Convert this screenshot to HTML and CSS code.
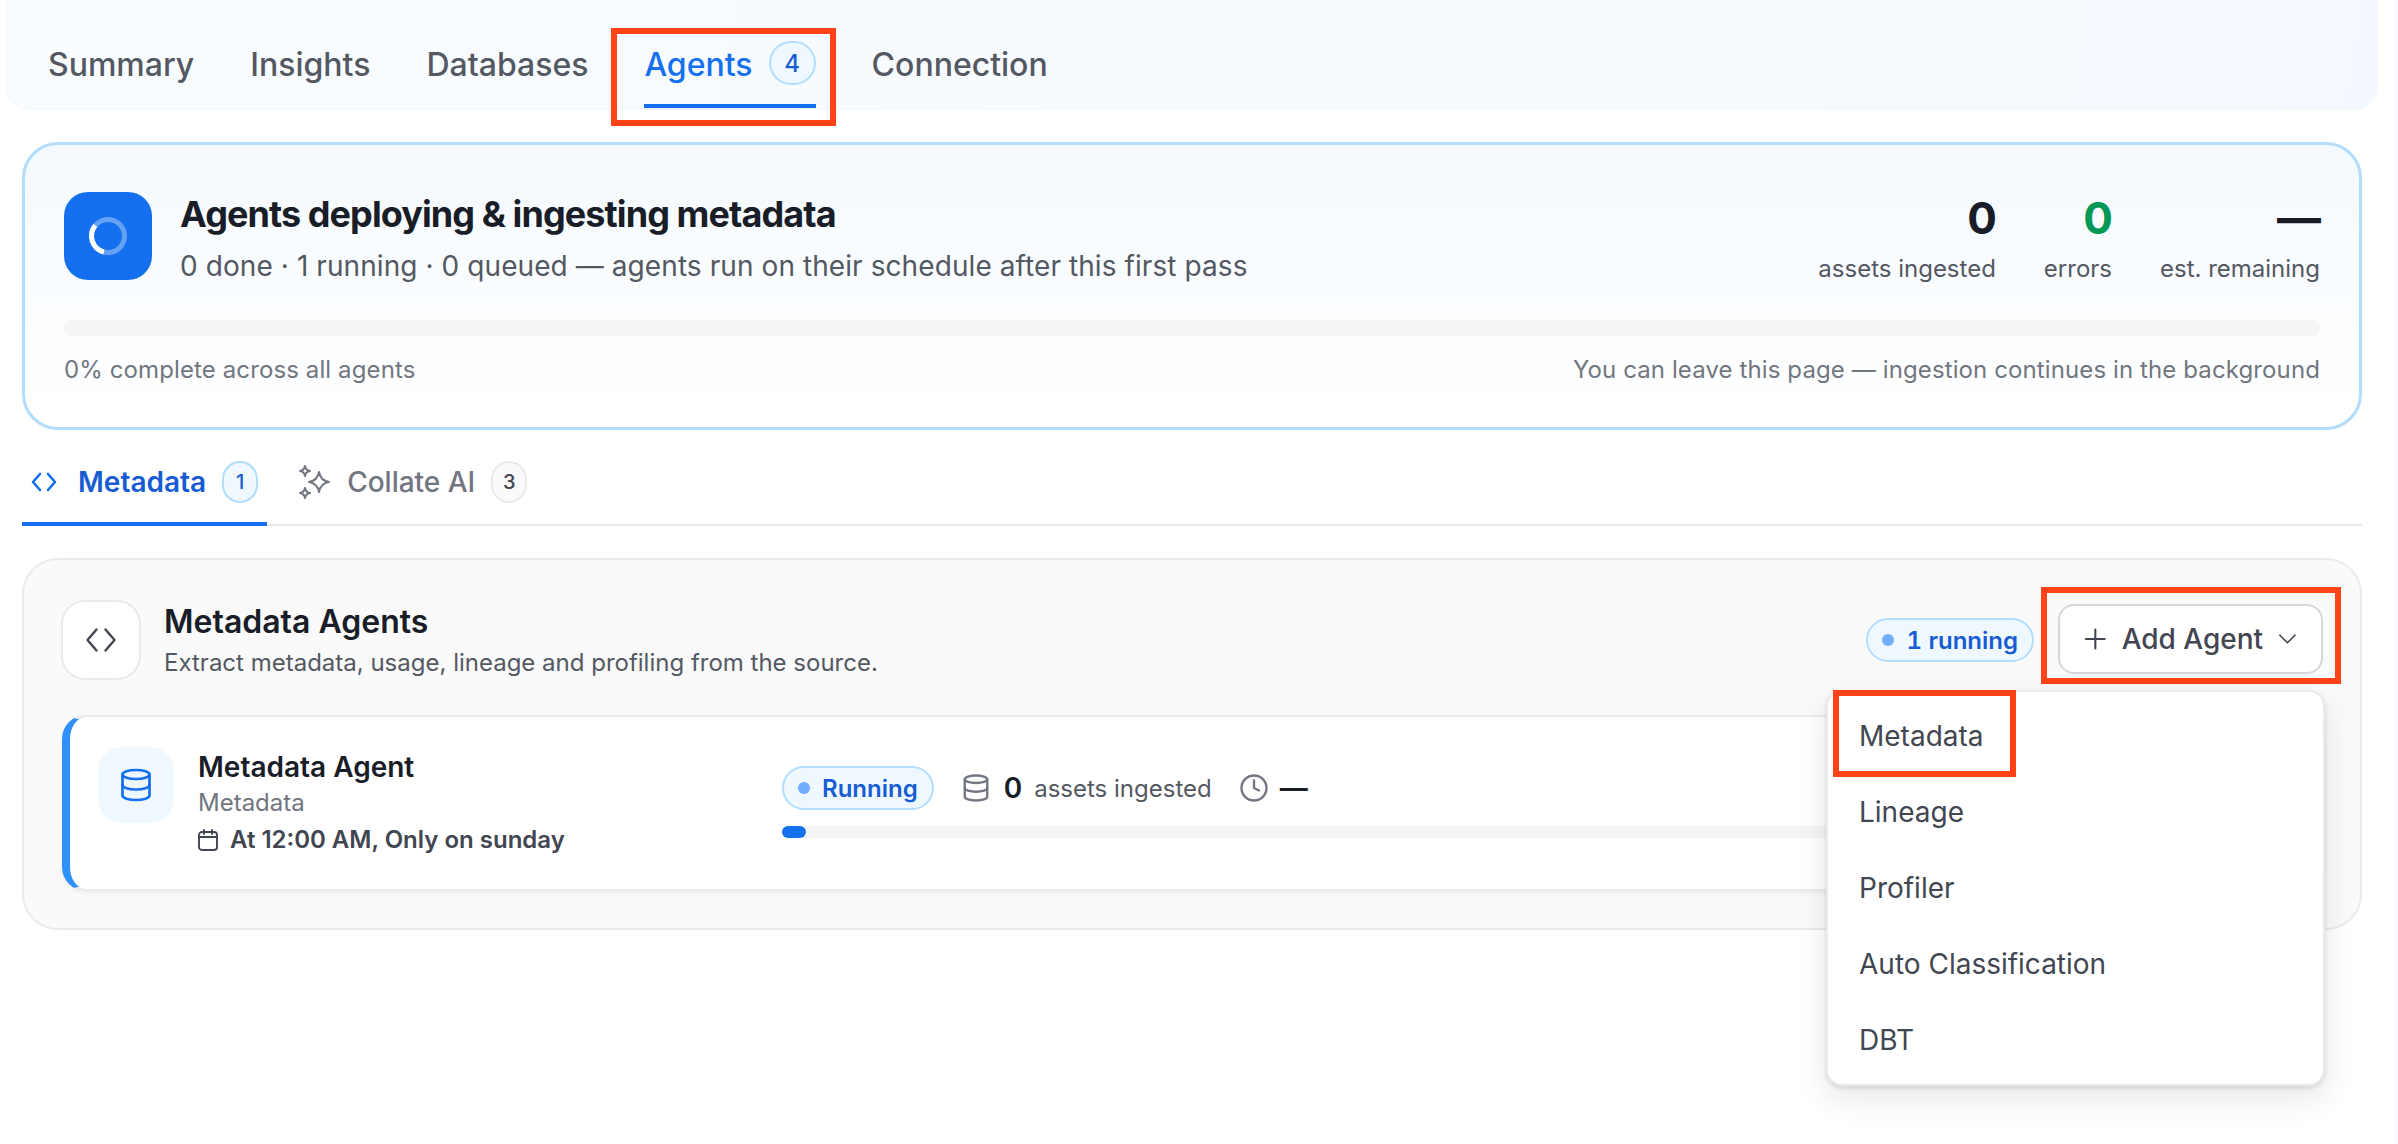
FILE: index.html
```html
<!DOCTYPE html>
<html>
    <head>
        <title>Agents</title>
        <meta charset="UTF-8">
        <link rel="stylesheet" href="styles.css">
    </head>
    <body>
        <nav class="top_tabs">
            <div class="top_tab">Summary</div>
            <div class="top_tab">Insights</div>
            <div class="top_tab">Databases</div>
            <div class="top_tab active">
                Agents <span class="tab_count">4</span>
                <div class="red_box agents_box"></div>
            </div>
            <div class="top_tab">Connection</div>
        </nav>

        <main class="content">
            <section class="hero">
                <div class="hero_head">
                    <div class="hero_icon">
                        <svg width="44" height="44" viewBox="0 0 44 44" fill="none">
                            <circle cx="22" cy="22" r="16.5" stroke="#fff" stroke-opacity="0.35" stroke-width="5"/>
                            <path d="M9.400 11.400A16.500 16.500 0 0 0 17.900 38" stroke="#fff" stroke-width="5"/>
                        </svg>
                    </div>
                    <div class="hero_text">
                        <h1>Agents deploying &amp; ingesting metadata</h1>
                        <p>0 done · 1 running · 0 queued — agents run on their schedule after this first pass</p>
                    </div>
                    <div class="stats">
                        <div class="stat"><b>0</b><span>assets ingested</span></div>
                        <div class="stat"><b class="green">0</b><span>errors</span></div>
                        <div class="stat"><b>—</b><span>est. remaining</span></div>
                    </div>
                </div>
                <div class="hero_bar"></div>
                <div class="hero_foot">
                    <span>0% complete across all agents</span>
                    <span>You can leave this page — ingestion continues in the background</span>
                </div>
            </section>

            <div class="sub_tabs">
                <div class="sub_tab active">
                    <svg class="code_icon" width="26" height="20" viewBox="0 0 26 20" fill="none" stroke="#1570ef" stroke-width="2.6" stroke-linecap="round" stroke-linejoin="round">
                        <path d="M9 2 2 10l7 8"/>
                        <path d="M17 2l7 8-7 8"/>
                    </svg>
                    Metadata <span class="sub_count">1</span>
                </div>
                <div class="sub_tab">
                    <svg width="33" height="34" viewBox="0 0 33 34" fill="none" stroke="#717680" stroke-width="2" stroke-linejoin="round">
                        <path d="M7 1C7.500 4 9 5.500 12 6 9 6.500 7.500 8 7 11 6.500 8 5 6.500 2 6 5 5.500 6.500 4 7 1Z"/>
                        <path d="M21 7C22 13 25 16 31 17 25 18 22 21 21 27 20 21 17 18 11 17 17 16 20 13 21 7Z"/>
                        <path d="M7 23C7.500 26 9 27.500 12 28 9 28.500 7.500 30 7 33 6.500 30 5 28.500 2 28 5 27.500 6.500 26 7 23Z"/>
                    </svg>
                    Collate AI <span class="sub_count grey">3</span>
                </div>
            </div>

            <section class="panel">
                <div class="panel_head">
                    <div class="panel_icon">
                        <svg width="36" height="36" viewBox="0 0 24 24" fill="none" stroke="#414651" stroke-width="1.6" stroke-linecap="round" stroke-linejoin="round">
                            <path d="M9 5 3 12l6 7"/>
                            <path d="M15 5l6 7-6 7"/>
                        </svg>
                    </div>
                    <div class="panel_text">
                        <h2>Metadata Agents</h2>
                        <p>Extract metadata, usage, lineage and profiling from the source.</p>
                    </div>
                    <div class="pill running_pill"><i class="dot"></i>1 running</div>
                    <div class="add_wrap">
                        <button class="add_btn" type="button">
                            <svg width="24" height="24" viewBox="0 0 24 24" fill="none" stroke="#414651" stroke-width="2.2" stroke-linecap="round">
                                <path d="M12 2v20M2 12h20"/>
                            </svg>
                            Add Agent
                            <svg class="caret" width="20" height="20" viewBox="0 0 20 20" fill="none" stroke="#414651" stroke-width="1.8" stroke-linecap="round" stroke-linejoin="round">
                                <path d="M2 6l8 8 8-8"/>
                            </svg>
                        </button>
                        <div class="red_box add_box"></div>
                        <div class="menu">
                            <div class="menu_item">Metadata</div>
                            <div class="menu_item">Lineage</div>
                            <div class="menu_item">Profiler</div>
                            <div class="menu_item">Auto Classification</div>
                            <div class="menu_item">DBT</div>
                            <div class="red_box menu_box"></div>
                        </div>
                    </div>
                </div>

                <div class="agent_card">
                    <div class="agent_icon">
                        <svg width="36" height="36" viewBox="0 0 24 24" fill="none" stroke="#1570ef" stroke-width="1.8" stroke-linecap="round" stroke-linejoin="round">
                            <ellipse cx="12" cy="5" rx="9" ry="3"/>
                            <path d="M21 5v14c0 1.660-4 3-9 3s-9-1.340-9-3V5"/>
                            <path d="M21 12c0 1.660-4 3-9 3s-9-1.340-9-3"/>
                        </svg>
                    </div>
                    <div class="agent_info">
                        <div class="agent_name">Metadata Agent</div>
                        <div class="agent_type">Metadata</div>
                        <div class="agent_when">
                            <svg width="24" height="24" viewBox="0 0 24 24" fill="none" stroke="#414651" stroke-width="1.9" stroke-linecap="round" stroke-linejoin="round">
                                <rect x="3" y="4" width="18" height="18" rx="3"/>
                                <path d="M8 2v4M16 2v4M3 9h18"/>
                            </svg>
                            At 12:00 AM, Only on sunday
                        </div>
                    </div>
                    <div class="agent_run">
                        <div class="agent_stats">
                            <div class="pill"><i class="dot"></i>Running</div>
                            <svg class="db_grey" width="30" height="30" viewBox="0 0 24 24" fill="none" stroke="#717680" stroke-width="1.9" stroke-linecap="round" stroke-linejoin="round">
                                <ellipse cx="12" cy="5" rx="9" ry="3"/>
                                <path d="M21 5v14c0 1.660-4 3-9 3s-9-1.340-9-3V5"/>
                                <path d="M21 12c0 1.660-4 3-9 3s-9-1.340-9-3"/>
                            </svg>
                            <b class="run_num">0</b>
                            <span class="run_label">assets ingested</span>
                            <svg class="clock" width="30" height="30" viewBox="0 0 24 24" fill="none" stroke="#717680" stroke-width="1.9" stroke-linecap="round" stroke-linejoin="round">
                                <circle cx="12" cy="12" r="10"/>
                                <path d="M12 6v6l4 2"/>
                            </svg>
                            <b class="run_num run_dash">—</b>
                        </div>
                        <div class="run_bar"><div class="run_fill"></div></div>
                    </div>
                </div>
            </section>
        </main>
    </body>
</html>
```

FILE: styles.css
```css
* {
    box-sizing: border-box;
}
body {
    margin: 0;
    height: 1144px;
    overflow: hidden;
    border-right: 4px solid #f8f8ff;
    background-color: #fff;
    font-family: Inter, "Liberation Sans", sans-serif;
    color: #181d27;
}
h1, h2, p {
    margin: 0;
}

/* top tabs */
.top_tabs {
    display: flex;
    gap: 56px;
    height: 110px;
    width: 2372px;
    margin-left: 6px;
    padding-left: 41px;
    border-radius: 0 0 24px 24px;
    border: 1px solid #f3f9fe;
    border-top: 0;
    background: linear-gradient(100deg, #f9fcff, #f3f9fe);
}
.top_tab {
    position: relative;
    display: flex;
    align-items: center;
    gap: 16px;
    height: 108px;
    padding-top: 24px;
    padding-bottom: 4px;
    font-size: 32px;
    font-weight: 500;
    color: #535862;
}
.top_tab.active {
    color: #1570ef;
    border-bottom: 4px solid #1570ef;
    padding-bottom: 0;
}
.tab_count {
    display: flex;
    align-items: center;
    justify-content: center;
    width: 47px;
    height: 44px;
    margin-top: -2px;
    border-radius: 22px;
    border: 2px solid #b2ddff;
    background-color: #eff8ff;
    font-size: 24px;
    color: #175cd3;
}
.red_box {
    position: absolute;
    border: 6px solid #ff4317;
    pointer-events: none;
}
.agents_box {
    left: -33px;
    right: -20px;
    top: 28px;
    height: 98px;
}

/* main */
.content {
    padding: 32px 32px 0 22px;
}
.hero {
    height: 288px;
    padding: 47px 39px 0;
    border: 3px solid #b2ddff;
    border-radius: 36px;
    background: linear-gradient(180deg, #f5faff, #fff);
}
.hero_head {
    display: flex;
    align-items: flex-start;
}
.hero_icon {
    display: flex;
    align-items: center;
    justify-content: center;
    width: 88px;
    height: 88px;
    border-radius: 24px;
    background-color: #1570ef;
}
.hero_text {
    flex: 1;
    margin-left: 28px;
}
.hero_text h1 {
    font-size: 36px;
    line-height: 44px;
    font-weight: 700;
    letter-spacing: -0.92px;
}
.hero_text p {
    margin-top: 12px;
    font-size: 28px;
    line-height: 36px;
    letter-spacing: 0.08px;
    color: #535862;
}
.stats {
    display: flex;
    gap: 48px;
}
.stat {
    display: flex;
    flex-direction: column;
    align-items: flex-end;
}
.stat b {
    margin-right: -1px;
    font-size: 44px;
    line-height: 52px;
    font-weight: 700;
}
.stat .green {
    color: #039855;
}
.stat span {
    margin-top: 9px;
    font-size: 24px;
    line-height: 32px;
    color: #535862;
}
.hero_bar {
    height: 16px;
    margin-top: 35px;
    border-radius: 8px;
    background-color: #f5f5f5;
}
.hero_foot {
    display: flex;
    justify-content: space-between;
    margin-top: 18px;
    font-size: 24px;
    line-height: 32px;
    letter-spacing: 0.11px;
    color: #717680;
}

/* metadata / collate tabs */
.sub_tabs {
    display: flex;
    height: 96px;
    border-bottom: 2px solid #e9eaeb;
}
.sub_tab {
    display: flex;
    align-items: center;
    height: 96px;
    padding: 12px 9px 0;
    gap: 16px;
    border-bottom: 4px solid transparent;
    font-size: 28px;
    font-weight: 500;
    color: #717680;
}
.sub_tab.active {
    font-weight: 600;
    color: #175cd3;
    border-bottom-color: #1570ef;
    margin-right: 22px;
}
.code_icon {
    margin-right: 5px;
}
.sub_count {
    display: flex;
    align-items: center;
    justify-content: center;
    width: 36px;
    height: 42px;
    border-radius: 21px;
    border: 2px solid #b2ddff;
    background-color: #eff8ff;
    font-size: 20px;
    font-weight: 500;
    color: #175cd3;
}
.sub_count.grey {
    border-color: #e9eaeb;
    background-color: #fafafa;
    color: #414651;
}

/* panel */
.panel {
    height: 372px;
    margin-top: 32px;
    padding: 40px 37px 0;
    border: 2px solid #e9eaeb;
    border-radius: 36px;
    background-color: #fafafa;
}
.panel_head {
    display: flex;
    align-items: center;
    height: 80px;
}
.panel_icon {
    display: flex;
    align-items: center;
    justify-content: center;
    width: 80px;
    height: 80px;
    border-radius: 24px;
    border: 2px solid #e9eaeb;
    background-color: #fff;
}
.panel_text {
    flex: 1;
    margin-left: 23px;
}
.panel_text h2 {
    font-size: 32px;
    line-height: 40px;
    font-weight: 600;
}
.panel_text p {
    margin-top: 5px;
    font-size: 24px;
    line-height: 32px;
    color: #535862;
}
.pill {
    display: flex;
    align-items: center;
    gap: 12px;
    height: 44px;
    padding: 0 14px;
    border-radius: 22px;
    border: 2px solid #b2ddff;
    background-color: #eff8ff;
    font-size: 24px;
    font-weight: 600;
    font-variant-numeric: tabular-nums;
    color: #175cd3;
}
.dot {
    width: 12px;
    height: 12px;
    border-radius: 50%;
    background-color: #70adff;
}
.add_wrap {
    position: relative;
    margin-left: 24px;
    margin-top: -2px;
}
.add_btn {
    display: flex;
    align-items: center;
    gap: 15px;
    width: 265px;
    height: 70px;
    padding: 0 24px;
    border-radius: 16px;
    border: 2px solid #d5d7da;
    background-color: #fff;
    font-family: inherit;
    font-size: 28px;
    font-weight: 500;
    white-space: nowrap;
    color: #414651;
}
.add_box {
    left: -17px;
    right: -18px;
    top: -17px;
    height: 97px;
}
.menu {
    position: absolute;
    z-index: 2;
    top: 86px;
    right: -2px;
    width: 499px;
    height: 396px;
    padding: 6px 31px;
    border-radius: 16px;
    border: 2px solid #e9eaeb;
    background-color: #fff;
    box-shadow: 0 12px 32px rgba(10, 13, 18, 0.1), 0 2px 4px rgba(10, 13, 18, 0.12);
}
.menu_item {
    height: 76px;
    line-height: 76px;
    font-size: 28px;
    color: #414651;
}
.menu_box {
    left: 5px;
    top: -2px;
    width: 183px;
    height: 87px;
}

/* agent card */
.agent_card {
    display: flex;
    height: 176px;
    margin-top: 35px;
    margin-left: 1px;
    padding: 30px 0 0 28px;
    border: 2px solid #e9eaeb;
    border-left: 8px solid #2e90fa;
    border-radius: 24px;
    background-color: #fff;
    box-shadow: 0 2px 4px rgba(10, 13, 18, 0.06);
}
.agent_icon {
    display: flex;
    align-items: center;
    justify-content: center;
    width: 76px;
    height: 76px;
    border-radius: 24px;
    background-color: #eff8ff;
}
.agent_info {
    width: 584px;
    margin-left: 24px;
    margin-top: 2px;
}
.agent_name {
    font-size: 28px;
    line-height: 36px;
    font-weight: 600;
}
.agent_type {
    font-size: 24px;
    line-height: 36px;
    color: #717680;
}
.agent_when {
    display: flex;
    align-items: center;
    gap: 10px;
    font-size: 24px;
    line-height: 38px;
    font-weight: 600;
    color: #414651;
}
.agent_when svg {
    margin-left: -2px;
}
.agent_run {
    flex: 1;
    margin-top: 19px;
    margin-right: 30px;
}
.agent_stats {
    display: flex;
    align-items: center;
}
.db_grey {
    margin-left: 27px;
}
.run_num {
    margin-left: 13px;
    font-size: 28px;
    font-weight: 600;
}
.run_dash {
    margin-left: 11px;
}
.run_label {
    margin-left: 12px;
    font-size: 24px;
    color: #535862;
}
.clock {
    margin-left: 27px;
}
.run_bar {
    height: 12px;
    margin-top: 16px;
    border-radius: 6px;
    background-color: #f5f5f5;
}
.run_fill {
    width: 24px;
    height: 12px;
    border-radius: 6px;
    background-color: #1570ef;
}
```
